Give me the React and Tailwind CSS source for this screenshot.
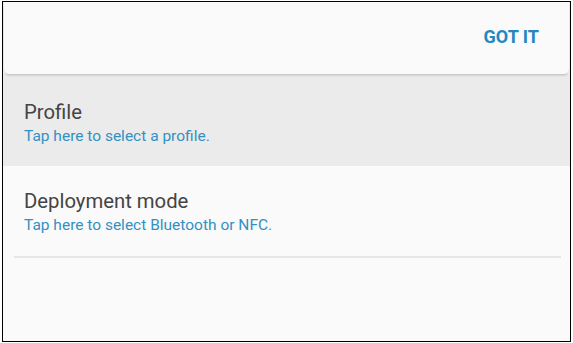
import React from 'react'

const rows = [
  { title: 'Profile', hint: 'Tap here to select a profile.', active: true },
  { title: 'Deployment mode', hint: 'Tap here to select Bluetooth or NFC.', active: false },
]

export default function App() {
  return (
    <div className="w-[573px] h-[343px] bg-white pl-[2px] pt-[1px] font-['Roboto',sans-serif]">
      <div className="w-[569px] h-[341px] border border-black bg-[#fafafa] flex flex-col overflow-hidden">
        {/* top bar card */}
        <div className="relative z-10 mx-px h-[72px] rounded-b-[5px] bg-[#fafafa] shadow-[0_1px_3px_rgba(0,0,0,0.22)] flex justify-end pt-[23px] pr-[30px]">
          <button className="h-6 text-[18px] leading-6 font-bold text-[#2587bf]">
            GOT IT
          </button>
        </div>

        {rows.map((row) => (
          <div
            key={row.title}
            className={
              row.active
                ? 'h-[92px] bg-[#ebebeb] pl-[21px] pt-[25px]'
                : 'h-[90px] pl-[21px] pt-[22px]'
            }
          >
            <div className="text-[20.3px] leading-[26px] text-[#444444]">{row.title}</div>
            <div className="mt-px text-[15.5px] leading-5 text-[#3390c2]">{row.hint}</div>
          </div>
        ))}

        <div className="ml-[11px] mr-[9px] h-[2px] bg-[#e6e6e6]" />
      </div>
    </div>
  )
}
